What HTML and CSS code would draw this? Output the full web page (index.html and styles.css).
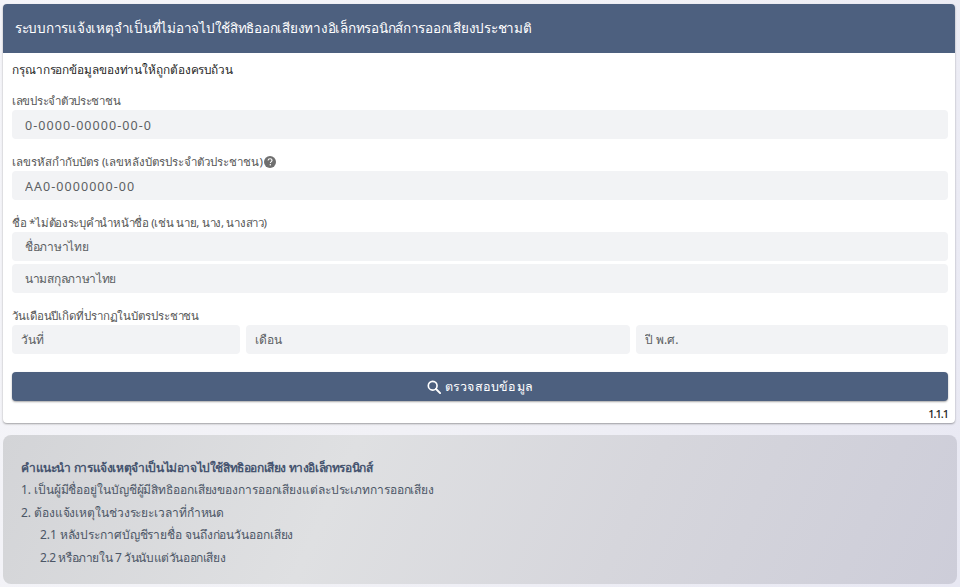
FILE: index.html
```html
<!DOCTYPE html>
<html lang="th">
  <head>
    <meta charset="UTF-8" />
    <meta name="viewport" content="width=device-width, initial-scale=1.0" />
    <title>ระบบการแจ้งเหตุจำเป็น</title>
    <link rel="stylesheet" href="styles.css">
  </head>
  <body>
    <div class="card">
      <div class="card-header">ระบบการแจ้งเหตุจำเป็นที่ไม่อาจไปใช้สิทธิออกเสียงทางอิเล็กทรอนิกส์การออกเสียงประชามติ</div>
      <div class="card-body">
        <p class="intro">กรุณากรอกข้อมูลของท่านให้ถูกต้องครบถ้วน</p>

        <div class="field field-first">
          <label for="citizenId">เลขประจำตัวประชาชน</label>
          <input type="text" id="citizenId" class="input-code" placeholder="0-0000-00000-00-0" />
        </div>

        <div class="field field-laser">
          <label for="laserId">เลขรหัสกำกับบัตร (เลขหลังบัตรประจำตัวประชาชน)<svg class="help-icon" viewBox="0 0 16 16" aria-hidden="true"><circle cx="8" cy="8" r="8" fill="#6f6f6f"/><path d="M5.4 6.1c.1-1.6 1.2-2.5 2.7-2.5 1.500 0 2.600.9 2.600 2.200 0 1-.6 1.500-1.300 2-.7.500-.9.800-.9 1.500" fill="none" stroke="#fff" stroke-width="1.500"/><circle cx="8.400" cy="11.800" r="1" fill="#fff"/></svg></label>
          <input type="text" id="laserId" class="input-code" placeholder="AA0-0000000-00" />
        </div>

        <div class="field field-name">
          <label for="firstName">ชื่อ *ไม่ต้องระบุคำนำหน้าชื่อ (เช่น นาย, นาง, นางสาว)</label>
          <input type="text" id="firstName" class="input-thai" placeholder="ชื่อภาษาไทย" />
          <input type="text" class="input-next input-thai" placeholder="นามสกุลภาษาไทย" />
        </div>

        <div class="field field-date">
          <label for="birthDay">วันเดือนปีเกิดที่ปรากฏในบัตรประชาชน</label>
          <div class="date-row">
            <input type="text" id="birthDay" placeholder="วันที่" />
            <input type="text" placeholder="เดือน" />
            <input type="text" placeholder="ปี พ.ศ." />
          </div>
        </div>

        <button class="search-btn" type="button">
          <svg class="search-icon" viewBox="0 0 16 16" aria-hidden="true"><circle cx="6.500" cy="6.500" r="5" fill="none" stroke="#fff" stroke-width="1.900"/><path d="M10.300 10.300 15 15" stroke="#fff" stroke-width="2.200" stroke-linecap="round"/></svg>
          ตรวจสอบข้อมูล
        </button>
        <div class="version">1.1.1</div>
      </div>
    </div>

    <div class="note">
      <p class="note-title">คำแนะนำ การแจ้งเหตุจำเป็นไม่อาจไปใช้สิทธิออกเสียง ทางอิเล็กทรอนิกส์</p>
      <p>1. เป็นผู้มีชื่ออยู่ในบัญชีผู้มีสิทธิออกเสียงของการออกเสียงแต่ละประเภทการออกเสียง</p>
      <p>2. ต้องแจ้งเหตุในช่วงระยะเวลาที่กำหนด</p>
      <p class="note-sub">2.1 หลังประกาศบัญชีรายชื่อ จนถึงก่อนวันออกเสียง</p>
      <p class="note-sub note-short">2.2 หรือภายใน 7 วันนับแต่วันออกเสียง</p>
    </div>
  </body>
</html>
```

FILE: styles.css
```css
html, body {
  height: 100%;
}
body {
  font-family: "Noto Sans", "Liberation Sans", "DejaVu Sans", sans-serif;
  font-size: 12px;
  margin: 0;
  padding: 4px 3px 0;
  box-sizing: border-box;
  overflow: hidden;
  background: linear-gradient(120deg, #f5f5f9 0%, #f1f1f6 50%, #e8e8f3 100%);
  color: #212529;
}
.card {
  width: 952px;
  height: 419px;
  background-color: #fff;
  border-radius: 4px;
  box-shadow: 0 1px 2px rgba(0, 0, 0, 0.35);
  overflow: hidden;
}
.card-header {
  height: 49px;
  line-height: 49px;
  padding-left: 12px;
  background-color: #4d607f;
  color: #fff;
  font-size: 13.500px;
  letter-spacing: -0.26px;
  white-space: nowrap;
}
.card-body {
  padding: 0 7px 0 9px;
}
.intro {
  margin: 0;
  padding-top: 7px;
  line-height: 18px;
  font-size: 11.800px;
  letter-spacing: -0.1px;
  color: #1f1f1f;
}
.field {
  margin-top: 13px;
}
.field-first label {
  letter-spacing: -0.3px;
}
.field-name label {
  letter-spacing: -0.3px;
}
.field-date label {
  letter-spacing: -0.1px;
}
label {
  display: flex;
  align-items: center;
  height: 19px;
  line-height: 18px;
  font-size: 11.500px;
  color: #555;
}
input {
  display: block;
  width: 100%;
  height: 29px;
  box-sizing: border-box;
  border: none;
  border-radius: 4px;
  padding: 0 13px;
  background-color: #f2f3f5;
  font-family: inherit;
  font-size: 12px;
}
input::placeholder {
  color: #5c5f63;
  opacity: 1;
}
.input-code {
  padding-top: 2px;
  font-size: 12.500px;
  letter-spacing: 1.050px;
}
.input-thai {
  letter-spacing: -0.3px;
}
.input-next {
  margin-top: 3px;
}
.help-icon {
  width: 12px;
  height: 12px;
  margin-left: 1px;
}
.date-row {
  display: grid;
  grid-template-columns: 228fr 384fr 312fr;
  gap: 6px;
}
.date-row input {
  padding: 0 9px;
}
.search-btn {
  display: flex;
  align-items: center;
  justify-content: center;
  gap: 4px;
  width: 100%;
  height: 29px;
  margin-top: 18px;
  border: none;
  border-radius: 4px;
  background-color: #4d607f;
  box-shadow: 0 1px 2px rgba(0, 0, 0, 0.35);
  color: #fff;
  font-family: inherit;
  font-size: 12.500px;
  font-weight: 500;
  letter-spacing: 0.2px;
  cursor: pointer;
}
.search-icon {
  width: 14px;
  height: 14px;
}
.version {
  margin-top: 6px;
  line-height: 14px;
  text-align: right;
  font-size: 11px;
  font-weight: 500;
  letter-spacing: -1px;
  color: #222;
}
.note {
  width: 954px;
  height: 149px;
  margin-top: 12px;
  padding: 22px 18px 0;
  box-sizing: border-box;
  border-radius: 8px;
  background: linear-gradient(115deg, #d3d4d7 0%, #dfe0e2 35%, #d6d6dc 65%, #cdcdd9 100%);
  color: #4c5666;
  font-size: 12px;
  letter-spacing: -0.1px;
}
.note p {
  margin: 0;
  line-height: 22.400px;
}
.note .note-title {
  font-weight: 700;
  letter-spacing: -0.4px;
  color: #46546f;
}
.note .note-sub {
  padding-left: 19px;
}
.note .note-short {
  letter-spacing: -0.4px;
}
```
